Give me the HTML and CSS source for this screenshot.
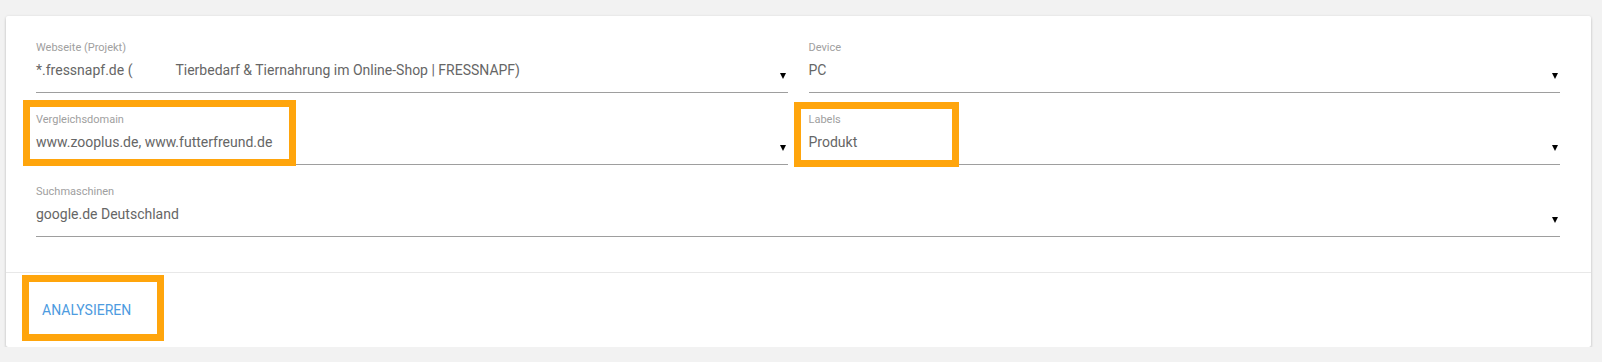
FILE: index.html
```html
<!DOCTYPE html>
<html lang="de">
<head>
  <meta charset="UTF-8">
  <meta name="viewport" content="width=device-width, initial-scale=1.0">
  <title>Analyse</title>
  <link rel="stylesheet" href="styles.css">
</head>
<body>
  <div class="card">
    <div class="fields">
      <div class="field">
        <div class="field-label">Webseite (Projekt)</div>
        <div class="field-row">
          <span class="field-value">*.fressnapf.de (<span class="spacer"></span>Tierbedarf &amp; Tiernahrung im Online-Shop | FRESSNAPF)</span>
          <svg class="caret" width="6" height="6" viewBox="0 0 6 6"><polygon points="0,0 6,0 3,6"/></svg>
        </div>
      </div>
      <div class="field">
        <div class="field-label">Device</div>
        <div class="field-row">
          <span class="field-value">PC</span>
          <svg class="caret" width="6" height="6" viewBox="0 0 6 6"><polygon points="0,0 6,0 3,6"/></svg>
        </div>
      </div>
      <div class="field">
        <div class="field-label">Vergleichsdomain</div>
        <div class="field-row">
          <span class="field-value">www.zooplus.de, www.futterfreund.de</span>
          <svg class="caret" width="6" height="6" viewBox="0 0 6 6"><polygon points="0,0 6,0 3,6"/></svg>
        </div>
      </div>
      <div class="field">
        <div class="field-label">Labels</div>
        <div class="field-row">
          <span class="field-value">Produkt</span>
          <svg class="caret" width="6" height="6" viewBox="0 0 6 6"><polygon points="0,0 6,0 3,6"/></svg>
        </div>
      </div>
      <div class="field field-wide">
        <div class="field-label">Suchmaschinen</div>
        <div class="field-row">
          <span class="field-value">google.de Deutschland</span>
          <svg class="caret" width="6" height="6" viewBox="0 0 6 6"><polygon points="0,0 6,0 3,6"/></svg>
        </div>
      </div>
    </div>
    <div class="actions">
      <button type="button" class="button">Analysieren</button>
    </div>

    <div class="mark mark-domain"></div>
    <div class="mark mark-labels"></div>
    <div class="mark mark-action"></div>
  </div>
</body>
</html>
```

FILE: styles.css
```css
body {
  font-family: Roboto, "Liberation Sans", Arial, sans-serif;
  background-color: #f2f2f2;
  margin: 0;
  padding: 16px 11px 0 6px;
}
.card {
  position: relative;
  background-color: #ffffff;
  border-radius: 2px;
  box-shadow: 0 2px 3px rgba(0, 0, 0, 0.18), 0 0 3px rgba(0, 0, 0, 0.08);
}
.fields {
  display: grid;
  grid-template-columns: 1fr 1fr;
  column-gap: 21px;
  row-gap: 20px;
  padding: 25px 31px 35px 30px;
  border-bottom: 1px solid #e8e8e8;
}
.field-wide {
  grid-column: 1 / 3;
}
.field-label {
  font-size: 11px;
  line-height: 13px;
  color: #a0a0a0;
  margin-bottom: 6px;
}
.field-row {
  display: flex;
  align-items: flex-end;
  justify-content: space-between;
  padding-bottom: 12px;
  border-bottom: 1px solid #9e9e9e;
}
.field-value {
  font-size: 14px;
  line-height: 20px;
  color: #666666;
  white-space: nowrap;
}
.spacer {
  display: inline-block;
  width: 43px;
}
.caret {
  display: block;
  margin: 0 2px 1px 0;
  fill: #000000;
}
.actions {
  padding: 19px 20px 19px 20px;
}
.button {
  display: block;
  height: 36px;
  padding: 0 16px;
  font-family: inherit;
  font-size: 14px;
  text-transform: uppercase;
  color: #4d9be0;
  background: none;
  border: none;
  cursor: pointer;
}
.mark {
  position: absolute;
  border: 7px solid #ffa50c;
  box-sizing: border-box;
}
.mark-domain {
  left: 17px;
  top: 84px;
  width: 273px;
  height: 66px;
}
.mark-labels {
  left: 788px;
  top: 86px;
  width: 165px;
  height: 65px;
}
.mark-action {
  left: 16px;
  top: 259px;
  width: 142px;
  height: 66px;
}
```
